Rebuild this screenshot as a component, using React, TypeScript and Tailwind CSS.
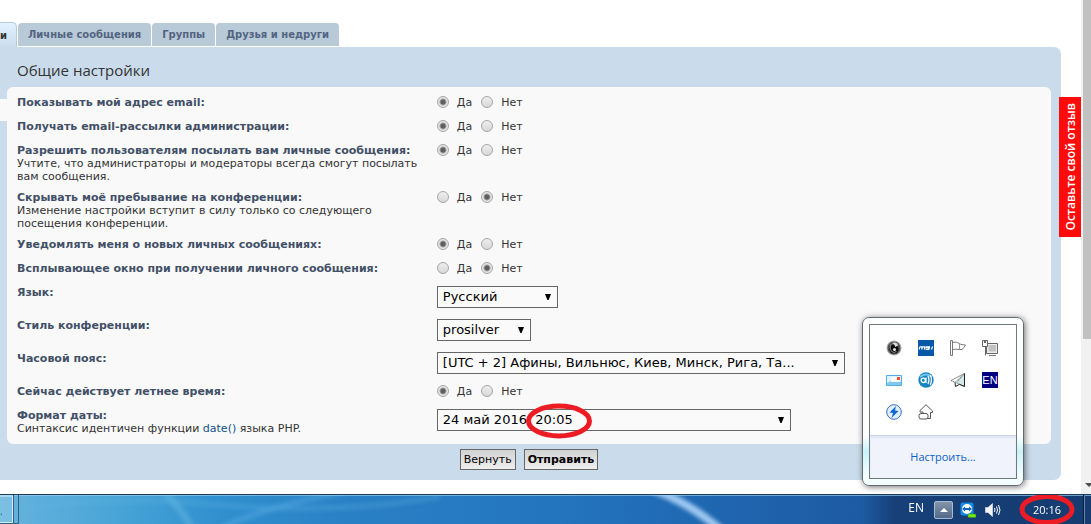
import type { ReactNode } from 'react';

type Row = {
  id: string;
  label: string;
  hint?: string;
  value?: 'yes' | 'no';
  select?: { text: string; width: string };
};

const rows: Row[] = [
  { id: 'email', label: 'Показывать мой адрес email:', value: 'yes' },
  { id: 'mailing', label: 'Получать email-рассылки администрации:', value: 'yes' },
  {
    id: 'pm',
    label: 'Разрешить пользователям посылать вам личные сообщения:',
    hint: 'Учтите, что администраторы и модераторы всегда смогут посылать вам сообщения.',
    value: 'yes',
  },
  {
    id: 'hidden',
    label: 'Скрывать моё пребывание на конференции:',
    hint: 'Изменение настройки вступит в силу только со следующего посещения конференции.',
    value: 'no',
  },
  { id: 'notify', label: 'Уведомлять меня о новых личных сообщениях:', value: 'yes' },
  { id: 'popup', label: 'Всплывающее окно при получении личного сообщения:', value: 'no' },
  { id: 'lang', label: 'Язык:', select: { text: 'Русский', width: 'w-[121px]' } },
  { id: 'style', label: 'Стиль конференции:', select: { text: 'prosilver', width: 'w-[94px]' } },
  {
    id: 'tz',
    label: 'Часовой пояс:',
    select: { text: '[UTC + 2] Афины, Вильнюс, Киев, Минск, Рига, Та...', width: 'w-[408px]' },
  },
  { id: 'dst', label: 'Сейчас действует летнее время:', value: 'yes' },
  { id: 'date', label: 'Формат даты:', select: { text: '24 май 2016, 20:05', width: 'w-[354px]' } },
];

function Radio({ name, text, on }: { name: string; text: string; on: boolean }) {
  return (
    <label className="flex items-start gap-2">
      <input
        type="radio"
        name={name}
        defaultChecked={on}
        className="size-3 shrink-0 appearance-none rounded-full border border-[#a6a6a6] bg-linear-to-b from-[#eeeeee] to-[#d8d8d8] checked:bg-[radial-gradient(circle,#5e5e5e_0px,#5e5e5e_2px,#e6e6e6_4px)]"
      />
      {text}
    </label>
  );
}

function SettingRow({ row }: { row: Row }) {
  const title = <span className="font-bold text-[#425067]">{row.label}</span>;
  return (
    <div className="flex items-start">
      <div className="w-[41%] shrink-0 pr-2">
        {row.select ? <label htmlFor={row.id}>{title}</label> : <div id={row.id + '-label'}>{title}</div>}
        {row.hint && <p>{row.hint}</p>}
        {row.id === 'date' && (
          <p>
            Синтаксис идентичен функции{' '}
            <a href="#date" className="text-[#105289]">
              date()
            </a>{' '}
            языка PHP.
          </p>
        )}
      </div>
      {row.select ? (
        <div className="h-[25px]">
          <div className={'relative ' + row.select.width}>
            <select
              id={row.id}
              className="block h-[22px] w-full appearance-none border border-[#666666] bg-[#fafafa] pl-[5px] text-[13px] leading-5 text-black"
            >
              <option>{row.select.text}</option>
            </select>
            <svg viewBox="0 0 6 6" className="pointer-events-none absolute top-2 right-[7px] size-[6px]">
              <path d="M0 0H6L3.6 6H2.4Z" fill="#000" />
            </svg>
            {row.id === 'date' && (
              <svg
                viewBox="0 0 66 36"
                className="pointer-events-none absolute -top-[6px] left-[89px] h-[36px] w-[66px]"
              >
                <ellipse cx="33" cy="18" rx="30.5" ry="15" fill="none" stroke="#ed1c24" strokeWidth="5" />
              </svg>
            )}
          </div>
        </div>
      ) : (
        <div role="group" aria-labelledby={row.id + '-label'} className="flex h-4 items-start gap-[9px]">
          <Radio name={row.id} text="Да" on={row.value === 'yes'} />
          <Radio name={row.id} text="Нет" on={row.value === 'no'} />
        </div>
      )}
    </div>
  );
}

function Icon({ children }: { children: ReactNode }) {
  return (
    <button className="flex size-8 items-center justify-center">
      <svg viewBox="0 0 16 16" className="size-4">
        {children}
      </svg>
    </button>
  );
}

function TrayPopup() {
  return (
    <div className="absolute right-[67px] bottom-[38px] z-10 w-[162px] rounded-[7px] border border-[#5f6b70] bg-linear-to-b from-white from-70% via-[#c9f3f8] via-80% to-[#f4feff] to-95% p-[6px] shadow-[1px_1px_6px_rgba(0,0,0,0.55)]">
      <div className="border border-[#6f777b] bg-white">
        <div className="grid h-[110px] grid-cols-[repeat(4,32px)] content-start px-2 pt-[7px]">
          <Icon>
            <circle cx="8" cy="8" r="7" fill="#555" stroke="#aaa" />
            <circle cx="8" cy="9" r="4.600" fill="#0c0c0c" />
            <path d="M5 4Q3 8 5.500 11.500Q8 13.500 10.500 11.500" fill="none" stroke="#888" />
            <path d="M6 3Q11 1 12 5.500L9 7Q9.500 5 6 3Z" fill="#ddd" />
            <circle cx="8.500" cy="9.500" r="1.500" fill="#e8e8e8" />
          </Icon>
          <Icon>
            <path d="M0 0H16V16H0Z" fill="#0658a8" />
            <path d="M1 9.500L2 6.800H7L6.300 9.500M4.400 7L3.700 9.500M12 6.800H8.600L8.200 8H11.300L10.800 9.500H7.600M13.500 9.500L14.500 6.500" fill="none" stroke="#fff" strokeWidth="1.200" />
          </Icon>
          <Icon>
            <path d="M3 2.500C6 1.500 7 2.500 9.500 3.500C11 5 13 4.500 15.500 5C14 6.500 14 8.500 12 9.500C9 10 7 8.500 3 9.500" fill="#fff" stroke="#777" />
            <path d="M9.500 3.500V9.500" stroke="#999" fill="none" />
            <path d="M.5 .5H2.500V15.500H.5Z" fill="#fff" stroke="#777" />
          </Icon>
          <Icon>
            <path d="M4.500 3.500H15.500V13.500H4.500Z" fill="#eee" stroke="#666" />
            <path d="M6.500 5H14V11.500H6.500Z" fill="#c2c2c2" />
            <path d="M7 15.500H14" stroke="#777" />
            <path d="M.5 .5H5.500V6.500H.5Z" fill="#fff" stroke="#666" />
            <path d="M2.500 0V3M3.500 0V3M3.500 6.500V15.500" fill="none" stroke="#666" />
          </Icon>
          <Icon>
            <path d="M.5 3.500H15.500V13.500H.5Z" fill="#dff3ff" stroke="#50ade0" />
            <path d="M1 13H15V10L11 9H5L1 11Z" fill="#80c8ef" />
            <path d="M5 5H14V10H5Z" fill="#f6fbff" />
            <path d="M11 5H14V8H11Z" fill="#f2511b" />
          </Icon>
          <Icon>
            <circle cx="8" cy="8" r="7.700" fill="#1784c3" />
            <path d="M2 5Q8 0 14 5" stroke="#70c6ee" strokeWidth="2" fill="none" />
            <circle cx="5.300" cy="8.300" r="2.200" fill="none" stroke="#fff" strokeWidth="1.300" />
            <path d="M8 5.500V11M10 4Q12 8 10 12M12.300 3Q14.500 8 12.300 13" fill="none" stroke="#fff" strokeWidth="1.200" />
          </Icon>
          <Icon>
            <path d="M14.500 1.500L1 8.500L5 10.500Z" fill="#fff" stroke="#333" strokeWidth=".8" strokeDasharray="1.500 .7" />
            <path d="M14.500 1.500L6.500 11L14.500 14.500Z" fill="#d5e8ea" stroke="#7d9699" strokeWidth=".8" />
            <path d="M14.500 1.500V14.500L9.500 12.300L5.500 14.500L5 10.500" fill="none" stroke="#222" />
          </Icon>
          <button className="flex size-8 items-center justify-center">
            <span className="flex size-4 items-center justify-center bg-[#000080] font-['Liberation_Sans',sans-serif] text-[11px] leading-4 text-white">
              EN
            </span>
          </button>
          <Icon>
            <circle cx="8" cy="8" r="7.300" fill="#e0f1fc" stroke="#3d6dbb" />
            <path d="M10 2L3.500 8.500L7 9L5.500 14L12.500 7L9 6.500Z" fill="#1368d0" />
          </Icon>
          <Icon>
            <path d="M8 .7L14.500 7V8.500H12.500V14.500H5V8H2V6.500Z" fill="#fff" stroke="#555" />
            <rect x="1" y="9.500" width="9" height="5.500" rx="2" fill="#fff" stroke="#555" />
          </Icon>
        </div>
        <div className="flex h-[43px] items-center justify-center border-t border-[#ccd6e6] bg-[#f0f3fc] shadow-[inset_0_2px_2px_#dfe6f2]">
          <a href="#customize" className="font-['Open_Sans',sans-serif] text-[11px] leading-4 text-[#0b62c4]">
            Настроить...
          </a>
        </div>
      </div>
    </div>
  );
}

function Taskbar() {
  return (
    <footer className="relative flex h-[30px] items-center justify-end overflow-hidden border-t border-[#1d3b57] bg-[linear-gradient(90deg,#67b3dd_0%,#4aa6d7_10%,#3190cf_20%,#2a80c5_32%,#2376be_50%,#1f66b0_66%,#1d5ba3_79%,#164078_82%,#163c70_100%)] font-['Open_Sans',sans-serif] text-[12px] text-white">
      <svg viewBox="0 0 1091 29" preserveAspectRatio="none" className="absolute inset-0 size-full">
        <defs>
          <filter id="soft" x="-20%" y="-50%" width="140%" height="200%">
            <feGaussianBlur stdDeviation="2" />
          </filter>
        </defs>
        <g filter="url(#soft)" fill="none">
          <path d="M652 -6Q690 8 722 36" stroke="#9fc9f2" strokeWidth="8" />
          <path d="M220 33Q270 10 350 -4" stroke="#5fb0e2" strokeWidth="5" opacity=".45" />
          <path d="M165 -2Q180 12 192 33" stroke="#70bde6" strokeWidth="7" opacity=".4" />
          <path d="M20 14Q110 0 220 10T440 2" stroke="#60b5e0" strokeWidth="5" opacity=".3" />
        </g>
        <path d="M0 .5H1091" stroke="#9ad0ef" strokeOpacity=".65" />
        <path d="M0 1H12.500V27.500H0" fill="#8fcbe9" fillOpacity=".5" stroke="#d5effa" />
        <path d="M13.500 0V28.500H0M18.500 0V28.500H14" fill="none" stroke="#286181" />
        <path d="M1083.500 0V29" stroke="#071d38" />
        <path d="M1084.500 0V29" stroke="#6289b2" />
      </svg>
      <span className="absolute top-[10px] left-0 text-[10px] leading-3 text-[#315e78]">.</span>
      <div className="relative flex items-center pr-4">
        <span className="mr-[10px] pb-1 leading-4">EN</span>
        <button
          aria-label="Скрытые значки"
          className="mr-[7px] flex h-[18px] w-[19px] items-center justify-center rounded-xs border border-[#a9bacd] bg-linear-to-b from-[#8495ab] to-[#526a88]"
        >
          <svg viewBox="0 0 8 4" className="h-1 w-2">
            <path d="M4 0L8 4H0Z" fill="#fff" />
          </svg>
        </button>
        <svg viewBox="0 0 16 16" className="mr-[9px] size-4">
          <rect x=".5" y=".5" width="13" height="13" rx="2" fill="#148be0" />
          <circle cx="7" cy="7" r="5" fill="#fff" />
          <path d="M2 7L5 4.500V6H9V4.500L12 7L9 9.500V8H5V9.500Z" fill="#1268b8" />
          <rect x="8" y="12" width="8" height="3.500" rx="1" fill="#75e51a" stroke="#2c8a08" strokeWidth=".5" />
        </svg>
        <svg viewBox="0 0 16 16" className="mr-[18px] size-4">
          <path d="M.5 5.500H3L7.500 1.500V14.500L3 10.500H.5Z" fill="#f6f6f6" stroke="#fff" strokeWidth=".5" />
          <path d="M9.500 6Q10.500 8 9.500 10M11.500 4.500Q13.500 8 11.500 11.500M13.500 3Q16.500 8 13.500 13" fill="none" stroke="#fff" />
        </svg>
        <div className="relative flex w-14 items-center justify-center">
          <time className="text-[11px] leading-4">20:16</time>
          <svg viewBox="0 0 56 34" className="absolute -top-[9px] left-0 h-[34px] w-14">
            <ellipse cx="28" cy="16.500" rx="25" ry="13" fill="none" stroke="#ed1c24" strokeWidth="5" />
          </svg>
        </div>
      </div>
    </footer>
  );
}

export default function App() {
  return (
    <div className="relative flex min-h-screen flex-col overflow-x-hidden bg-white font-['DejaVu_Sans',Verdana,sans-serif] text-[11px] leading-[13px] text-[#333333]">
      <div className="flex grow">
        <main className="min-w-0 grow pt-[22px] pr-5">
          <nav className="flex h-[25px] items-start gap-px text-[10px] font-bold">
            <a
              href="#settings"
              className="flex h-[25px] w-[17px] items-center justify-end rounded-tr-[5px] border-t border-r border-[#b8cad8] bg-linear-to-b from-[#e3f2ff] to-[#cadceb] pr-[9px] text-[#333333]"
            >
              и
            </a>
            {['Личные сообщения', 'Группы', 'Друзья и недруги'].map((t) => (
              <a
                key={t}
                href="#tab"
                className="mt-px flex h-[23px] items-center rounded-t-[4px] bg-[#b8cad8] px-[10px] whitespace-nowrap text-[#536482]"
              >
                {t}
              </a>
            ))}
          </nav>
          <form className="rounded-r-[7px] bg-[#cadceb] pr-[10px] pb-[10px]">
            <h1 className="h-10 pt-3 pl-[17px] font-['Open_Sans',sans-serif] text-[15px] leading-[22px]">
              Общие настройки
            </h1>
            <div className="flex items-start">
              <div className="mt-3 h-[22px] w-[7px] shrink-0 bg-[#f9f9f9]" />
              <fieldset className="flex min-w-0 grow flex-col gap-2 rounded-[6px] bg-[#f9f9f9] px-[10px] py-[9px]">
                {rows.map((row) => (
                  <SettingRow key={row.id} row={row} />
                ))}
              </fieldset>
            </div>
            <div className="flex justify-center gap-2 pt-[5px] pl-[7px]">
              <button
                type="reset"
                className="h-[21px] border border-[#666666] bg-linear-to-b from-[#d2d2d2] to-[#efefef] px-[3px] text-black"
              >
                Вернуть
              </button>
              <button
                type="submit"
                className="h-[21px] border border-[#666666] bg-linear-to-b from-[#d2d2d2] to-[#efefef] px-[3px] font-bold text-black"
              >
                Отправить
              </button>
            </div>
          </form>
        </main>
        <div className="flex w-[10px] shrink-0 flex-col justify-between bg-[#f1f1f1] pl-[2px]">
          <div className="h-[339px] bg-[#c1c1c1]" />
          <svg viewBox="0 0 8 12" className="h-3 w-2">
            <path d="M2 1H10L6 5Z" fill="#505050" />
          </svg>
        </div>
      </div>
      <button className="absolute top-[97px] right-[10px] flex h-[140px] w-[22px] items-center justify-center bg-[#ff0b0b] font-['Open_Sans',sans-serif] text-[12px] font-semibold text-white">
        <span className="rotate-180 whitespace-nowrap [writing-mode:vertical-rl]">Оставьте свой отзыв</span>
      </button>
      <TrayPopup />
      <Taskbar />
    </div>
  );
}
